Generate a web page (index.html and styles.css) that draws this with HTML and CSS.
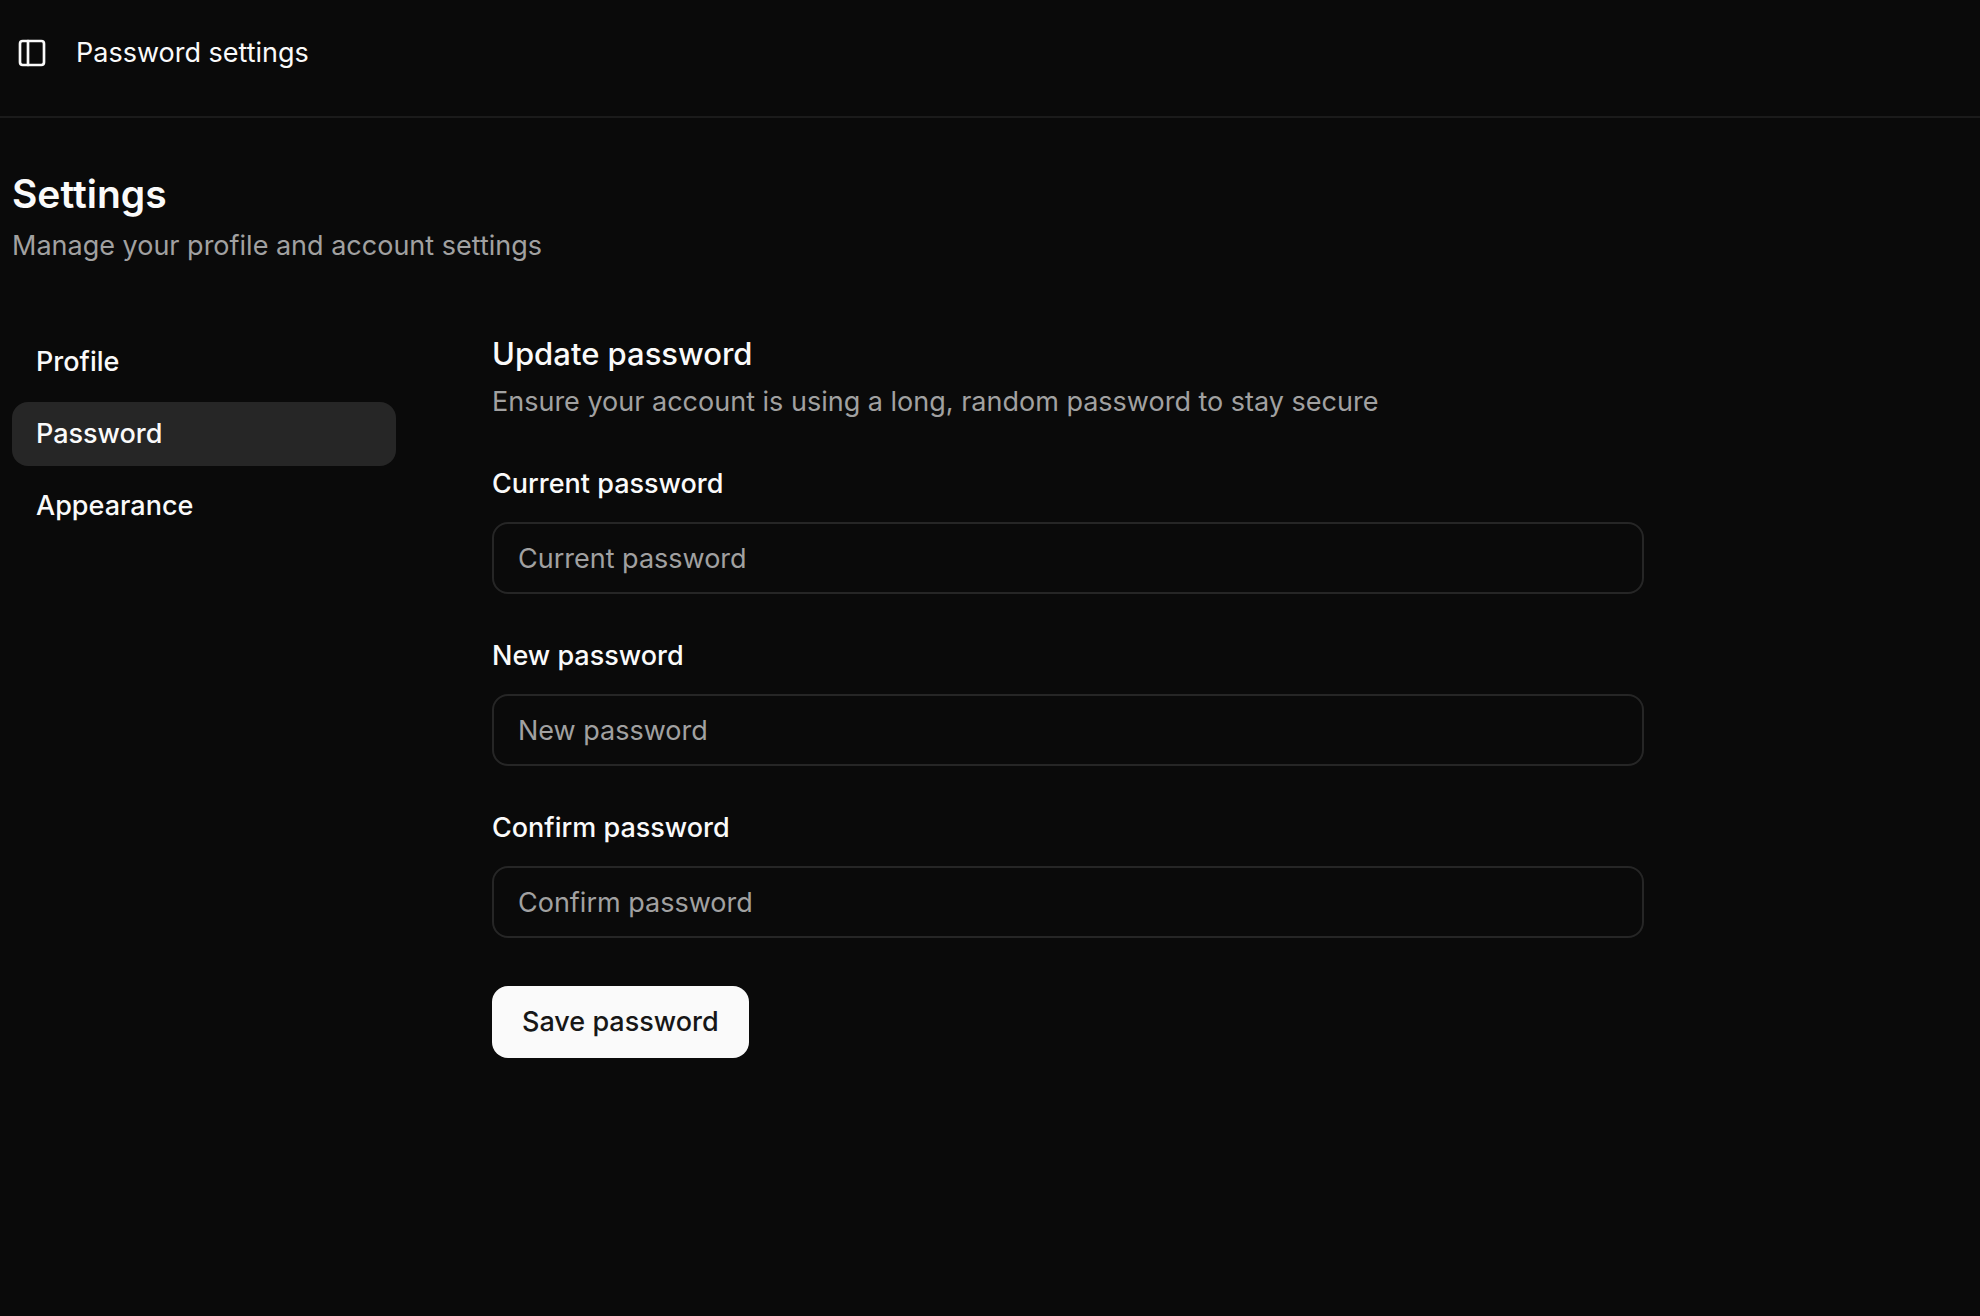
FILE: index.html
```html
<!DOCTYPE html>
<html lang="en">
<head>
  <meta charset="utf-8">
  <meta name="viewport" content="width=device-width, initial-scale=1">
  <title>Password settings</title>
  <link rel="stylesheet" href="styles.css">
</head>
<body>
  <header class="topbar">
    <button class="sidebar-toggle" type="button" aria-label="Toggle sidebar">
      <svg class="icon" viewBox="0 0 24 24" fill="none" stroke="currentColor" stroke-width="2" stroke-linecap="round" stroke-linejoin="round" aria-hidden="true">
        <rect x="3" y="3" width="18" height="18" rx="2"/>
        <path d="M9 3v18"/>
      </svg>
    </button>
    <span class="crumb">Password settings</span>
  </header>

  <main class="page">
    <div class="intro">
      <h1 class="page-title">Settings</h1>
      <p class="muted">Manage your profile and account settings</p>
    </div>

    <div class="columns">
      <nav class="side-nav" aria-label="Settings">
        <a class="nav-link" href="#profile">Profile</a>
        <a class="nav-link active" href="#password" aria-current="page">Password</a>
        <a class="nav-link" href="#appearance">Appearance</a>
      </nav>

      <section class="panel">
        <div class="panel-head">
          <h2 class="panel-title">Update password</h2>
          <p class="muted">Ensure your account is using a long, random password to stay secure</p>
        </div>
        <form class="form">
          <div class="field">
            <label class="label" for="current">Current password</label>
            <input class="input" id="current" type="password" placeholder="Current password" autocomplete="current-password">
          </div>
          <div class="field">
            <label class="label" for="new">New password</label>
            <input class="input" id="new" type="password" placeholder="New password" autocomplete="new-password">
          </div>
          <div class="field">
            <label class="label" for="confirm">Confirm password</label>
            <input class="input" id="confirm" type="password" placeholder="Confirm password" autocomplete="new-password">
          </div>
          <button class="save" type="submit">Save password</button>
        </form>
      </section>
    </div>
  </main>
</body>
</html>
```
FILE: styles.css
```css
*,
*::before,
*::after {
  box-sizing: border-box;
}

body {
  margin: 0;
  min-height: 100vh;
  background: #0a0a0a;
  color: #fafafa;
  font-family: Inter, "Liberation Sans", sans-serif;
  font-size: 27px;
  line-height: 40px;
}

h1,
h2,
p {
  margin: 0;
}

.topbar {
  display: flex;
  align-items: center;
  gap: 28px;
  padding: 33px 16px 43px;
  border-bottom: 2px solid #1b1b1b;
}

.sidebar-toggle {
  display: flex;
  padding: 0;
  border: 0;
  background: none;
  color: inherit;
}

.icon {
  width: 32px;
  height: 32px;
}

.page {
  padding: 48px 12px;
}

.intro,
.panel-head {
  display: flex;
  flex-direction: column;
  gap: 4px;
}

.page-title {
  font-size: 39px;
  font-weight: 600;
  line-height: 56px;
}

.muted {
  color: #a1a1a1;
}

.columns {
  display: flex;
  gap: 96px;
  margin-top: 64px;
}

.side-nav {
  display: flex;
  flex: 0 0 384px;
  flex-direction: column;
  gap: 8px;
}

.nav-link {
  padding: 12px 24px;
  border-radius: 16px;
  color: inherit;
  font-weight: 500;
  text-decoration: none;
}

.nav-link.active {
  background: #262626;
}

.panel {
  display: flex;
  flex: 1;
  flex-direction: column;
  gap: 48px;
  min-width: 0;
  max-width: 1152px;
}

.panel-title {
  font-size: 31px;
  font-weight: 500;
  line-height: 48px;
}

.form {
  display: flex;
  flex-direction: column;
  align-items: flex-start;
  gap: 48px;
}

.field {
  display: flex;
  flex-direction: column;
  gap: 24px;
  width: 100%;
}

.label {
  font-weight: 500;
  line-height: 28px;
}

.input {
  width: 100%;
  height: 72px;
  padding: 0 24px;
  border: 2px solid #262626;
  border-radius: 16px;
  background: transparent;
  color: inherit;
  font: inherit;
}

.input::placeholder {
  color: #a1a1a1;
  opacity: 1;
}

.save {
  height: 72px;
  padding: 0 30px;
  border: 0;
  border-radius: 16px;
  background: #fafafa;
  color: #171717;
  font: inherit;
  font-weight: 500;
}
```
